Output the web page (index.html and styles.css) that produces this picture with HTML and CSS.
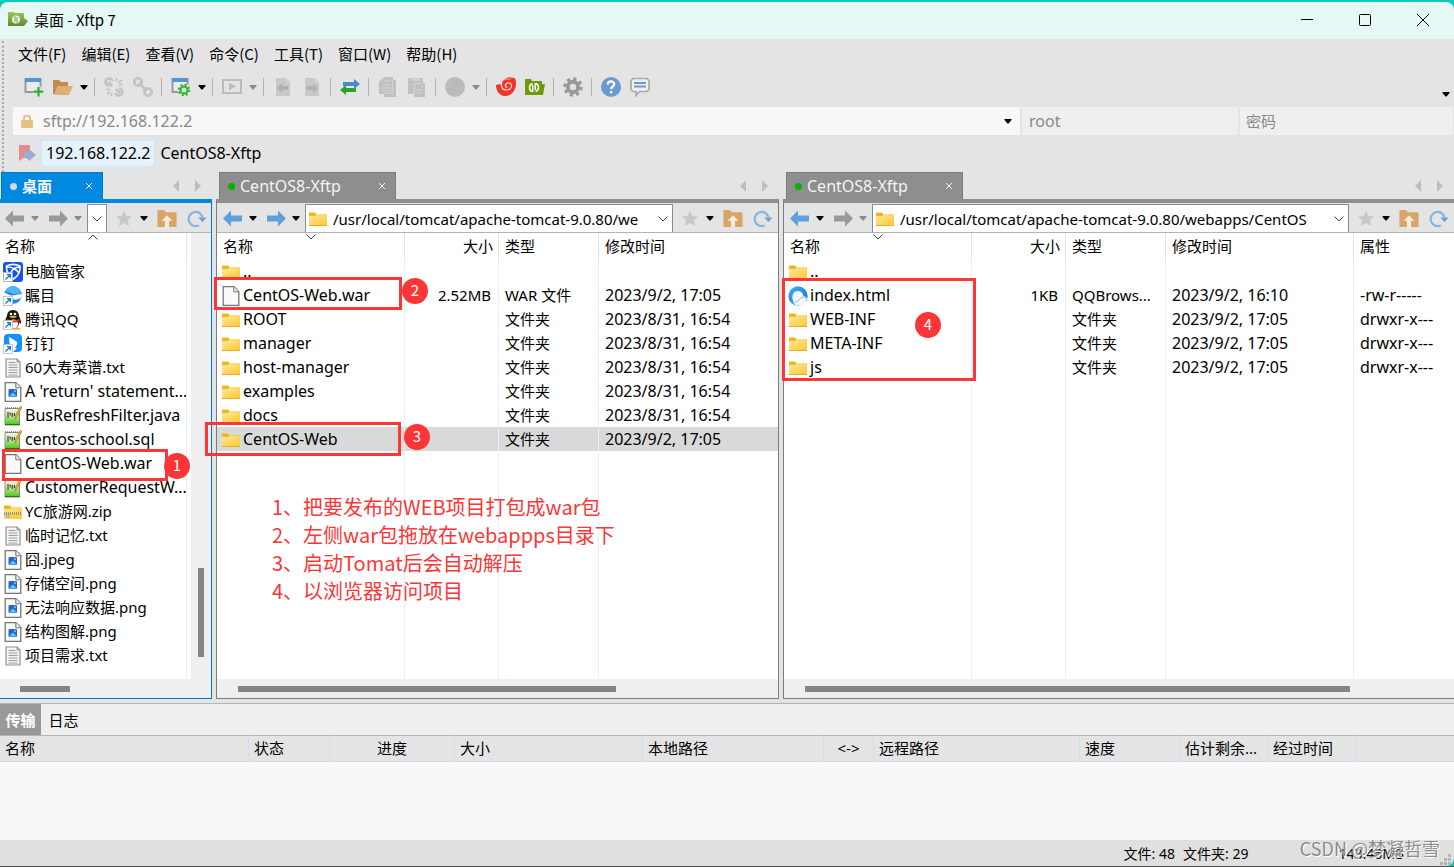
FILE: index.html
```html
<!DOCTYPE html>
<html lang="zh-CN">
<head>
<meta charset="utf-8">
<title>桌面 - Xftp 7</title>
<link rel="stylesheet" href="styles.css">
</head>
<body>
<svg class="sprite" aria-hidden="true">
  <defs>
    <linearGradient id="gFolder" x1="0" y1="0" x2="1" y2="1"><stop offset="0" stop-color="#ffe69a"/><stop offset="1" stop-color="#fdc72f"/></linearGradient>
    <linearGradient id="gApp" x1="0" y1="0" x2="0" y2="1"><stop offset="0" stop-color="#a3c25c"/><stop offset="1" stop-color="#5f8a35"/></linearGradient>
    <linearGradient id="gNpp" x1="0" y1="0" x2="0" y2="1"><stop offset="0" stop-color="#f4f8e8"/><stop offset=".4" stop-color="#c9eda0"/><stop offset="1" stop-color="#3cc40c"/></linearGradient>
    <linearGradient id="gQb" x1="0" y1="0" x2="1" y2="1"><stop offset="0" stop-color="#3fb4fb"/><stop offset="1" stop-color="#1466d8"/></linearGradient>
    <symbol id="caret" viewBox="0 0 8 5"><path d="M.5 0h7v1L4.500 4.500h-1L.5 1z" fill="currentColor"/></symbol>
    <symbol id="chev" viewBox="0 0 10 6"><path d="M.5.5 5 5 9.500.5" fill="none" stroke="#444" /></symbol>
    <symbol id="close" viewBox="0 0 8 8"><path d="M1 1l6 6M7 1 1 7" fill="none" stroke="currentColor"/></symbol>
    <symbol id="folder" viewBox="0 0 18 15"><path d="M0 1h6l1.500 2H18v2H0z" fill="#f5b417"/><path d="M0 4.500h6L7.500 3.300H18V14.500H0z" fill="url(#gFolder)"/><path d="M0 14h18" stroke="#e6ab27"/></symbol>
    <symbol id="page" viewBox="0 0 17 20"><path d="M.7.700h10.800l4.800 4.800v13.800H.7z" fill="#fafafa" stroke="#777" stroke-width="1.300"/><path d="M11.300.8v5h5" fill="#eee" stroke="#777"/></symbol>
    <symbol id="txt" viewBox="0 0 17 20"><path d="M1.500 1h11l3 3v15h-14z" fill="#f4f4f4" stroke="#929292" stroke-width="1.200"/><path d="M12.500 1v3h3" fill="none" stroke="#929292"/><path d="M4 4.500h7M4 7h9M4 9.500h9M4 12h9M4 14.500h9M4 17h9" stroke="#9a9a9a"/></symbol>
    <symbol id="img" viewBox="0 0 17 20"><path d="M.7.700h10.800l4.800 4.800v13.800H.7z" fill="#fafafa" stroke="#777" stroke-width="1.300"/><path d="M11.300.8v5h5" fill="#eee" stroke="#777"/><rect x="4" y="7" width="8.500" height="8" rx="1" fill="#2468cc"/><path d="M4.500 14.500l4-4 4 4z" fill="#5cc8ff"/><circle cx="10.500" cy="9" r=".8" fill="#fff"/></symbol>
    <symbol id="npp" viewBox="0 0 18 20"><path d="M1 2.500h14.500v16.500H1z" fill="url(#gNpp)" stroke="#8c8c8c"/><path d="M1 2h14" stroke="#777" stroke-width="1.500" stroke-dasharray="1 1"/><path d="M4 6v6M6.200 6.500v3M8.300 7v4M10.400 7v3" stroke="#444" stroke-width="1.200"/><path d="M18 1.200 13 11l-2 2.500.3-3.500L16.200.5z" fill="#f0b535" stroke="#9a6410" stroke-width=".6"/><path d="M1 18.500h15" stroke="#287a10"/></symbol>
    <symbol id="zip" viewBox="0 0 18 15"><path d="M0 1h6l1.500 2H18v2H0z" fill="#f5b417"/><path d="M0 4.500h6L7.500 3.300H18V14.500H0z" fill="url(#gFolder)"/><path d="M0 9h18" stroke="#888" stroke-width="2.500" stroke-dasharray="1 1"/><path d="M2 9.500v3h3v-3z" fill="#ddd" stroke="#777" stroke-width=".6"/></symbol>
    <symbol id="shortcut" viewBox="0 0 20 20"><rect x=".5" y="10.500" width="9" height="9" fill="#fff" stroke="#bbb" stroke-width=".8"/><path d="M2.500 17.500 7 13M3.800 12.700H7.300V16.200" fill="none" stroke="#0a7bd8" stroke-width="1.300"/></symbol>
    <symbol id="guanjia" viewBox="0 0 20 20"><rect width="20" height="20" rx="3" fill="#1453f0"/><path d="M3.500 4c4-2 9-2 13.500 0 .5 6-2 10-6.500 13C6 14 3 10 3.500 4zM4 5c5 0 9 2 12 6M17 5c-5 0-8 2-10 7" fill="none" stroke="#fff" stroke-width="1.600"/><use href="#shortcut"/></symbol>
    <symbol id="zhumu" viewBox="0 0 20 20"><circle cx="10" cy="9" r="8.700" fill="#1f86e6"/><path d="M1 6.500c4 1 5 3 8 3s6-2 10-1c0 3-2 4-5 5-5 1-8-4-13-2z" fill="#fff"/><path d="M1.500 6c3-6 9-7 12-5s5 4 5 6.500c-3-1-5 .5-8 .5S6 5 1.500 6z" fill="#4fb4f8"/><use href="#shortcut"/></symbol>
    <symbol id="qq" viewBox="0 0 20 20"><path d="M10 0c4 0 6 3 6 6 1 2 2 4 2 7 0 1-1 1-2-1 0 4-2 7-6 7s-6-3-6-7c-1 2-2 2-2 1 0-3 1-5 2-7 0-3 2-6 6-6z" fill="#171717"/><ellipse cx="10.500" cy="14" rx="4.500" ry="4.500" fill="#fff"/><circle cx="8" cy="4" r="1.300" fill="#fff"/><circle cx="12" cy="4" r="1.300" fill="#fff"/><path d="M6 6.500q4-1.500 8 0-4 3-8 0z" fill="#f8b51a"/><path d="M4 9q6 3 12.500 0v2q-6 3-12.500 0z" fill="#e8262b"/><path d="M11 19q3-2 6 0z" fill="#f8a51a" stroke="#f8a51a"/><use href="#shortcut"/></symbol>
    <symbol id="ding" viewBox="0 0 20 20"><rect x="1" width="18" height="18" rx="4" fill="#1590fa"/><path d="M6 3c3 2 6 3 8 5 1 2-1 4-2 6l2 0-5 5 1-4-2-1 1-1C7 11 6 9 6 3z" fill="#fff"/><use href="#shortcut"/></symbol>
    <symbol id="qb" viewBox="0 0 20 20"><circle cx="10" cy="10" r="9.700" fill="url(#gQb)"/><path d="M5 15c-2-6 1-10 5-10 3 0 5 2 5.500 5 2.500.5 4.500 3 4 6-.5 2.500-2 3.500-4 3.500H9C7 19 5.500 17.500 5 15z" fill="#f3f8ff"/><path d="M7 16c3 1 5-5 8-5 2 0 3 2 4 4" fill="none" stroke="#8bb4e6"/></symbol>
    <symbol id="back" viewBox="0 0 20 16"><path d="M0 8 8 0v5h11v6H8v5z" fill="currentColor"/></symbol>
    <symbol id="fwd" viewBox="0 0 20 16"><path d="M20 8 12 0v5H1v6h11v5z" fill="currentColor"/></symbol>
    <symbol id="star" viewBox="0 0 16 16"><path d="M8 0l2.300 5.400L16 6l-4.200 3.700L13 15.500 8 12.500l-5 3 1.200-5.800L0 6l5.700-.6z" fill="#c8c8c8"/></symbol>
    <symbol id="up" viewBox="0 0 18 16"><path d="M0 1q0-1 1-1h5l2 2h9q1 0 1 1v13H0z" fill="#d8a566"/><path d="M9 5 4 10h3v6h4v-6h3z" fill="#f4ece1"/></symbol>
    <symbol id="refresh" viewBox="0 0 20 18"><path d="M12 16.300A7.500 7.500 0 1 1 16 8" fill="none" stroke="#85b4df" stroke-width="2.300"/><path d="M11.500 8H20l-4.200 5z" fill="#6aa2d8"/></symbol>
    <symbol id="i-new" viewBox="0 0 20 20"><path d="M1.500 2h15v13h-15z" fill="#e9edf0" stroke="#999" stroke-width="2"/><path d="M1 1h16v4H1z" fill="#5596d0"/><path d="M14.500 9.500v10M9.500 14.500h10" stroke="#e4e4e4" stroke-width="5"/><path d="M14.500 10v9.500M9.700 14.700h9.600" stroke="#2db32c" stroke-width="2.200"/></symbol>
    <symbol id="i-open" viewBox="0 0 20 16"><path d="M0 1h6l2 2h7v4H5L2 15H0z" fill="#c28c4b"/><path d="M5 7h15l-4 9H1z" fill="#deb077"/></symbol>
    <symbol id="i-unlink" viewBox="0 0 20 20"><g fill="none" stroke="#c3c3c3" stroke-width="2.600"><path d="M8.500 4A3.500 3.500 0 1 0 5 8.500M11.500 16A3.500 3.500 0 1 0 15 11.500"/><path d="M4 5l4 4M12 12l4 4"/><path d="M2 12l4 1M3 17l3-2M7 19l1-3M12 4l1-3M14 6l4-3M15 8l4-1" stroke-width="1.800"/></g></symbol>
    <symbol id="i-link" viewBox="0 0 20 20"><g fill="none" stroke="#c3c3c3" stroke-width="2.600"><circle cx="5" cy="5" r="3.700"/><circle cx="15" cy="15" r="3.700"/><path d="M6 6l8 8"/></g></symbol>
    <symbol id="i-prop" viewBox="0 0 20 20"><path d="M1.500 2h15v13h-15z" fill="#e9edf0" stroke="#999" stroke-width="2"/><path d="M1 1h16v4H1z" fill="#5596d0"/><circle cx="13" cy="13" r="6.500" fill="#e4e4e4"/><circle cx="13" cy="13" r="3.500" fill="none" stroke="#2db32c" stroke-width="2"/><circle cx="13" cy="13" r="5.300" fill="none" stroke="#2db32c" stroke-width="2" stroke-dasharray="2 2.160"/></symbol>
    <symbol id="i-run" viewBox="0 0 20 20"><rect x="1" y="3" width="18" height="13" fill="none" stroke="#bcbcbc" stroke-width="2"/><path d="M7 5.500l7 4-7 4z" fill="#bcbcbc"/></symbol>
    <symbol id="i-left" viewBox="0 0 20 20"><path d="M3 1h10l4 4v14H3z" fill="#c8c8c8"/><path d="M13 1v4h4" fill="none" stroke="#ddd"/><path d="M4 11l5-5v3h6v4H9v3z" fill="#b2b2b2"/></symbol>
    <symbol id="i-right" viewBox="0 0 20 20"><path d="M3 1h10l4 4v14H3z" fill="#c8c8c8"/><path d="M13 1v4h4" fill="none" stroke="#ddd"/><path d="M16 11l-5-5v3H5v4h6v3z" fill="#b2b2b2"/></symbol>
    <symbol id="i-swap" viewBox="0 0 20 16"><path d="M20 5l-6-5v3H3v4h11v3z" fill="#4a87cf"/><path d="M0 11l6-5v3h10v4H6v3z" fill="#2aa32a"/></symbol>
    <symbol id="i-copy" viewBox="0 0 20 20"><path d="M6 0h9v3h3v17H6v-3H1V5z" fill="#c1c1c1"/><path d="M5 8h8M4 11h9M4 14h9M6 4h7" stroke="#d2d2d2"/><path d="M14.500 3v13.500H6" fill="none" stroke="#d0d0d0"/></symbol>
    <symbol id="i-paste" viewBox="0 0 20 20"><path d="M1 1h15v5h2v14H7v-3H1z" fill="#c1c1c1"/><path d="M4 2.500h9" stroke="#d6d6d6" stroke-width="2"/><path d="M7.500 17V6.500H13l4 4" fill="none" stroke="#d6d6d6"/><path d="M9 13h6M9 16h6" stroke="#d2d2d2"/></symbol>
    <symbol id="i-globe" viewBox="0 0 20 20"><circle cx="10" cy="10" r="10" fill="#bbb"/><path d="M9 3l3 2-2 2 2 3M5 12l3 2" fill="none" stroke="#b3b3b3"/></symbol>
    <symbol id="i-xshell" viewBox="0 0 20 20"><path d="M0 8c3-1 4-1 6 0 0-4 2-6 5-7 2-1 4-1 5 0 3-1 4 2 4 5 0 7-4 13-11 13C3 19 0 13 0 8z" fill="#f03428"/><path d="M5.500 8c0 3 2 5 5 5s5-2 5-4.500-3-3.500-5-2-1 4 1 3.500" fill="none" stroke="#f0e4e2" stroke-width="1.200"/><path d="M5 4.500C8 2 11 2 15 2" fill="none" stroke="#f0c8c4" stroke-width=".8"/></symbol>
    <symbol id="i-xftp" viewBox="0 0 20 16"><path d="M0 0h6l1 2h10v3h3l-2 11H0z" fill="#6b9a0c"/><path d="M7.500 4.500Q4.500 5.500 4.500 8.500T7 12.500M7.700 13V6M10.300 4v7M11 4.500Q13.500 5.500 13.500 8.500T10.500 12.500" fill="none" stroke="#fff" stroke-width="1.500"/></symbol>
    <symbol id="i-app" viewBox="0 0 20 15"><path d="M0 0h6l1 1h9v5l4 3-4 5H0z" fill="url(#gApp)"/><circle cx="8" cy="7.500" r="4" fill="#f3f7e9"/><path d="M7 4v6M9 5v6" stroke="#79a045"/></symbol>
    <symbol id="i-gear" viewBox="0 0 20 20"><circle cx="10" cy="10" r="5.200" fill="none" stroke="#999" stroke-width="4"/><circle cx="10" cy="10" r="8" fill="none" stroke="#999" stroke-width="3.500" stroke-dasharray="3.140 3.140"/></symbol>
    <symbol id="i-help" viewBox="0 0 20 20"><circle cx="10" cy="10" r="10" fill="#6a9bd0"/><path d="M6.800 7.500c0-4 6.400-4 6.400-.3 0 2.300-3 2.300-3 5M10.100 14v2.300" fill="none" stroke="#fff" stroke-width="2.300"/></symbol>
    <symbol id="i-chat" viewBox="0 0 20 20"><path d="M3 1.500h14l2 2v9l-2 2H9.500L6 18.500v-4H3l-2-2v-9z" fill="#f0f0f0" stroke="#aaa" stroke-width="1.700"/><path d="M4 6h12M4 9.500h12" stroke="#6a9bd0" stroke-width="1.800"/></symbol>
    <symbol id="i-lock" viewBox="0 0 12 13"><path d="M3 6V3.500a3 3 0 0 1 6 0V6" fill="none" stroke="#e7c184" stroke-width="2"/><rect y="5" width="12" height="8" rx="1" fill="#e7c184"/></symbol>
    <symbol id="i-mark" viewBox="0 0 17 17"><path d="M0 0h11v16l-5-4-6 4z" fill="#e28c8c"/><path d="M5 7h5V4l7 6-7 6v-3H5z" fill="#8fb0da"/></symbol>
    <symbol id="tri-l" viewBox="0 0 6 12"><path d="M6 0v12L0 6z" fill="#bdbdbd"/></symbol>
    <symbol id="tri-r" viewBox="0 0 6 12"><path d="M0 0v12l6-6z" fill="#bdbdbd"/></symbol>
  </defs>
</svg>

<div class="window">
  <header class="titlebar">
    <svg class="app-icon"><use href="#i-app"/></svg>
    <h1>桌面 - Xftp 7</h1>
    <div class="win-buttons">
      <button type="button" aria-label="最小化"><svg viewBox="0 0 12 12"><path d="M0 5.500h12"/></svg></button>
      <button type="button" aria-label="最大化"><svg viewBox="0 0 12 12"><rect x=".5" y=".5" width="11" height="11" rx="1"/></svg></button>
      <button type="button" aria-label="关闭"><svg viewBox="0 0 12 12"><path d="M0 0l12 12M12 0 0 12"/></svg></button>
    </div>
  </header>

  <div class="bars">
    <nav class="menu">
      <button type="button">文件(F)</button><button type="button">编辑(E)</button><button type="button">查看(V)</button><button type="button">命令(C)</button><button type="button">工具(T)</button><button type="button">窗口(W)</button><button type="button">帮助(H)</button>
    </nav>
    <div class="toolbar">
      <button type="button" aria-label="新建"><svg><use href="#i-new"/></svg></button>
      <button type="button" aria-label="打开"><svg><use href="#i-open"/></svg></button>
      <button type="button" class="drop" aria-label="打开列表"><svg><use href="#caret"/></svg></button>
      <span class="sep"></span>
      <button type="button" aria-label="断开"><svg><use href="#i-unlink"/></svg></button>
      <button type="button" aria-label="重新连接"><svg><use href="#i-link"/></svg></button>
      <span class="sep"></span>
      <button type="button" aria-label="属性"><svg><use href="#i-prop"/></svg></button>
      <button type="button" class="drop" aria-label="属性列表"><svg><use href="#caret"/></svg></button>
      <span class="sep"></span>
      <button type="button" aria-label="运行"><svg><use href="#i-run"/></svg></button>
      <button type="button" class="drop dim" aria-label="运行列表"><svg><use href="#caret"/></svg></button>
      <span class="sep"></span>
      <button type="button" aria-label="传到左侧"><svg><use href="#i-left"/></svg></button>
      <button type="button" aria-label="传到右侧"><svg><use href="#i-right"/></svg></button>
      <span class="sep"></span>
      <button type="button" aria-label="同步"><svg><use href="#i-swap"/></svg></button>
      <span class="sep"></span>
      <button type="button" aria-label="复制"><svg><use href="#i-copy"/></svg></button>
      <button type="button" aria-label="粘贴"><svg><use href="#i-paste"/></svg></button>
      <span class="sep"></span>
      <button type="button" aria-label="编码"><svg><use href="#i-globe"/></svg></button>
      <button type="button" class="drop dim" aria-label="编码列表"><svg><use href="#caret"/></svg></button>
      <span class="sep"></span>
      <button type="button" aria-label="Xshell"><svg><use href="#i-xshell"/></svg></button>
      <button type="button" aria-label="Xftp"><svg><use href="#i-xftp"/></svg></button>
      <span class="sep"></span>
      <button type="button" aria-label="选项"><svg><use href="#i-gear"/></svg></button>
      <span class="sep"></span>
      <button type="button" aria-label="帮助"><svg><use href="#i-help"/></svg></button>
      <button type="button" aria-label="反馈"><svg><use href="#i-chat"/></svg></button>
      <button type="button" class="drop overflow" aria-label="更多"><svg><use href="#caret"/></svg></button>
    </div>
    <form class="address">
      <div class="host"><svg class="lock"><use href="#i-lock"/></svg><input type="text" aria-label="主机" placeholder="sftp://192.168.122.2"><button type="button" class="drop" aria-label="主机列表"><svg><use href="#caret"/></svg></button></div>
      <input type="text" class="cred user" aria-label="用户名" placeholder="root">
      <input type="password" class="cred" aria-label="密码" placeholder="密码">
    </form>
    <nav class="links">
      <svg class="mark"><use href="#i-mark"/></svg>
      <a href="#" class="current">192.168.122.2</a><a href="#">CentOS8-Xftp</a>
    </nav>
  </div>

  <main class="panes">
    <section class="pane local">
      <div class="tabs"><div class="tab"><i class="dot"></i><b>桌面</b><button type="button" aria-label="关闭标签"><svg><use href="#close"/></svg></button></div><div class="arrows"><svg><use href="#tri-l"/></svg><svg><use href="#tri-r"/></svg></div></div>
      <div class="pane-body">
        <div class="nav">
          <button type="button" class="off" aria-label="后退"><svg><use href="#back"/></svg></button><button type="button" class="drop dim" aria-label="后退列表"><svg><use href="#caret"/></svg></button>
          <button type="button" class="off next" aria-label="前进"><svg><use href="#fwd"/></svg></button><button type="button" class="drop dim" aria-label="前进列表"><svg><use href="#caret"/></svg></button>
          <div class="path short"><button type="button" aria-label="路径列表"><svg><use href="#chev"/></svg></button></div>
          <button type="button" aria-label="收藏"><svg class="star"><use href="#star"/></svg></button><button type="button" class="drop" aria-label="收藏列表"><svg><use href="#caret"/></svg></button>
          <button type="button" class="next" aria-label="上一级"><svg><use href="#up"/></svg></button><button type="button" class="last" aria-label="刷新"><svg><use href="#refresh"/></svg></button>
        </div>
        <div class="list">
          <table>
            <thead><tr><th>名称<svg class="sort asc"><use href="#chev"/></svg></th></tr></thead>
            <tbody>
              <tr><td><svg class="ic big"><use href="#guanjia"/></svg>电脑管家</td></tr>
              <tr><td><svg class="ic big"><use href="#zhumu"/></svg>瞩目</td></tr>
              <tr><td><svg class="ic big"><use href="#qq"/></svg>腾讯QQ</td></tr>
              <tr><td><svg class="ic big"><use href="#ding"/></svg>钉钉</td></tr>
              <tr><td><svg class="ic"><use href="#txt"/></svg>60大寿菜谱.txt</td></tr>
              <tr><td class="latin"><svg class="ic"><use href="#img"/></svg>A 'return' statement...</td></tr>
              <tr><td class="latin"><svg class="ic"><use href="#npp"/></svg>BusRefreshFilter.java</td></tr>
              <tr><td class="latin"><svg class="ic"><use href="#npp"/></svg>centos-school.sql</td></tr>
              <tr><td class="latin"><svg class="ic"><use href="#page"/></svg>CentOS-Web.war</td></tr>
              <tr><td class="latin"><svg class="ic"><use href="#npp"/></svg>CustomerRequestW...</td></tr>
              <tr><td><svg class="ic"><use href="#zip"/></svg>YC旅游网.zip</td></tr>
              <tr><td><svg class="ic"><use href="#txt"/></svg>临时记忆.txt</td></tr>
              <tr><td><svg class="ic"><use href="#img"/></svg>囧.jpeg</td></tr>
              <tr><td><svg class="ic"><use href="#img"/></svg>存储空间.png</td></tr>
              <tr><td><svg class="ic"><use href="#img"/></svg>无法响应数据.png</td></tr>
              <tr><td><svg class="ic"><use href="#img"/></svg>结构图解.png</td></tr>
              <tr><td><svg class="ic"><use href="#txt"/></svg>项目需求.txt</td></tr>
              <tr class="fill"><td></td></tr>
            </tbody>
          </table>
          <div class="vscroll"><i></i></div>
        </div>
        <div class="hscroll"><i></i></div>
      </div>
    </section>

    <section class="pane">
      <div class="tabs"><div class="tab"><i class="dot"></i><span>CentOS8-Xftp</span><button type="button" aria-label="关闭标签"><svg><use href="#close"/></svg></button></div><div class="arrows"><svg><use href="#tri-l"/></svg><svg><use href="#tri-r"/></svg></div></div>
      <div class="pane-body">
        <div class="nav">
          <button type="button" aria-label="后退"><svg><use href="#back"/></svg></button><button type="button" class="drop" aria-label="后退列表"><svg><use href="#caret"/></svg></button>
          <button type="button" class="next" aria-label="前进"><svg><use href="#fwd"/></svg></button><button type="button" class="drop" aria-label="前进列表"><svg><use href="#caret"/></svg></button>
          <div class="path"><svg class="ic"><use href="#folder"/></svg><input type="text" aria-label="路径" value="/usr/local/tomcat/apache-tomcat-9.0.80/we"><button type="button" aria-label="路径列表"><svg><use href="#chev"/></svg></button></div>
          <button type="button" aria-label="收藏"><svg class="star"><use href="#star"/></svg></button><button type="button" class="drop" aria-label="收藏列表"><svg><use href="#caret"/></svg></button>
          <button type="button" class="next" aria-label="上一级"><svg><use href="#up"/></svg></button><button type="button" class="last" aria-label="刷新"><svg><use href="#refresh"/></svg></button>
        </div>
        <div class="list">
          <table>
            <colgroup><col class="c-name"><col class="c-size"><col class="c-type"><col></colgroup>
            <thead><tr><th>名称<svg class="sort"><use href="#chev"/></svg></th><th class="num">大小</th><th>类型</th><th>修改时间</th></tr></thead>
            <tbody>
              <tr><td class="latin"><svg class="ic"><use href="#folder"/></svg>..</td><td></td><td></td><td></td></tr>
              <tr><td class="latin"><svg class="ic"><use href="#page"/></svg>CentOS-Web.war</td><td class="num">2.52MB</td><td>WAR 文件</td><td class="latin">2023/9/2, 17:05</td></tr>
              <tr><td class="latin"><svg class="ic"><use href="#folder"/></svg>ROOT</td><td></td><td>文件夹</td><td class="latin">2023/8/31, 16:54</td></tr>
              <tr><td class="latin"><svg class="ic"><use href="#folder"/></svg>manager</td><td></td><td>文件夹</td><td class="latin">2023/8/31, 16:54</td></tr>
              <tr><td class="latin"><svg class="ic"><use href="#folder"/></svg>host-manager</td><td></td><td>文件夹</td><td class="latin">2023/8/31, 16:54</td></tr>
              <tr><td class="latin"><svg class="ic"><use href="#folder"/></svg>examples</td><td></td><td>文件夹</td><td class="latin">2023/8/31, 16:54</td></tr>
              <tr><td class="latin"><svg class="ic"><use href="#folder"/></svg>docs</td><td></td><td>文件夹</td><td class="latin">2023/8/31, 16:54</td></tr>
              <tr class="selected"><td class="latin"><svg class="ic"><use href="#folder"/></svg>CentOS-Web</td><td></td><td>文件夹</td><td class="latin">2023/9/2, 17:05</td></tr>
              <tr class="fill"><td></td><td></td><td></td><td></td></tr>
            </tbody>
          </table>
        </div>
        <div class="hscroll"><i></i></div>
      </div>
    </section>

    <section class="pane remote">
      <div class="tabs"><div class="tab"><i class="dot"></i><span>CentOS8-Xftp</span><button type="button" aria-label="关闭标签"><svg><use href="#close"/></svg></button></div><div class="arrows"><svg><use href="#tri-l"/></svg><svg><use href="#tri-r"/></svg></div></div>
      <div class="pane-body">
        <div class="nav">
          <button type="button" aria-label="后退"><svg><use href="#back"/></svg></button><button type="button" class="drop" aria-label="后退列表"><svg><use href="#caret"/></svg></button>
          <button type="button" class="off next" aria-label="前进"><svg><use href="#fwd"/></svg></button><button type="button" class="drop dim" aria-label="前进列表"><svg><use href="#caret"/></svg></button>
          <div class="path"><svg class="ic"><use href="#folder"/></svg><input type="text" aria-label="路径" value="/usr/local/tomcat/apache-tomcat-9.0.80/webapps/CentOS"><button type="button" aria-label="路径列表"><svg><use href="#chev"/></svg></button></div>
          <button type="button" aria-label="收藏"><svg class="star"><use href="#star"/></svg></button><button type="button" class="drop" aria-label="收藏列表"><svg><use href="#caret"/></svg></button>
          <button type="button" class="next" aria-label="上一级"><svg><use href="#up"/></svg></button><button type="button" class="last" aria-label="刷新"><svg><use href="#refresh"/></svg></button>
        </div>
        <div class="list">
          <table>
            <colgroup><col class="c-name"><col class="c-size"><col class="c-type"><col class="c-time"><col></colgroup>
            <thead><tr><th>名称<svg class="sort"><use href="#chev"/></svg></th><th class="num">大小</th><th>类型</th><th>修改时间</th><th>属性</th></tr></thead>
            <tbody>
              <tr><td class="latin"><svg class="ic"><use href="#folder"/></svg>..</td><td></td><td></td><td></td><td></td></tr>
              <tr><td class="latin"><svg class="ic big"><use href="#qb"/></svg>index.html</td><td class="num">1KB</td><td>QQBrows...</td><td class="latin">2023/9/2, 16:10</td><td class="latin">-rw-r-----</td></tr>
              <tr><td class="latin"><svg class="ic"><use href="#folder"/></svg>WEB-INF</td><td></td><td>文件夹</td><td class="latin">2023/9/2, 17:05</td><td class="latin">drwxr-x---</td></tr>
              <tr><td class="latin"><svg class="ic"><use href="#folder"/></svg>META-INF</td><td></td><td>文件夹</td><td class="latin">2023/9/2, 17:05</td><td class="latin">drwxr-x---</td></tr>
              <tr><td class="latin"><svg class="ic"><use href="#folder"/></svg>js</td><td></td><td>文件夹</td><td class="latin">2023/9/2, 17:05</td><td class="latin">drwxr-x---</td></tr>
              <tr class="fill"><td></td><td></td><td></td><td></td><td></td></tr>
            </tbody>
          </table>
        </div>
        <div class="hscroll"><i></i></div>
      </div>
    </section>

    <div class="frame f1"></div><span class="badge b1">1</span>
    <div class="frame f2"></div><span class="badge b2">2</span>
    <div class="frame f3"></div><span class="badge b3">3</span>
    <div class="frame f4"></div><span class="badge b4">4</span>
    <div class="notes"><p>1、把要发布的WEB项目打包成war包</p><p>2、左侧war包拖放在webappps目录下</p><p>3、启动Tomat后会自动解压</p><p>4、以浏览器访问项目</p></div>
  </main>

  <section class="transfer">
    <div class="switch"><button type="button" class="on">传输</button><button type="button">日志</button></div>
    <table>
      <colgroup><col class="w-name"><col class="w-state"><col class="w-prog"><col class="w-size"><col class="w-local"><col class="w-dir"><col class="w-remote"><col class="w-speed"><col class="w-time"><col class="w-time"><col></colgroup>
      <thead><tr><th>名称</th><th>状态</th><th class="mid">进度</th><th>大小</th><th>本地路径</th><th class="mid">&lt;-&gt;</th><th>远程路径</th><th>速度</th><th>估计剩余...</th><th>经过时间</th><th></th></tr></thead>
    </table>
    <div class="queue"></div>
  </section>
  <footer class="status">
    <span>文件: 48</span><span>文件夹: 29</span><span class="total">143.46MB</span>
    <svg class="grip" viewBox="0 0 12 12"><path d="M8 0h3v3H8zM4 4h3v3H4zM8 4h3v3H8zM0 8h3v3H0zM4 8h3v3H4zM8 8h3v3H8z" fill="#b4b4b4"/></svg>
    <span class="credit">CSDN @梦凝哲雪</span>
  </footer>
</div>
</body>
</html>
```
FILE: styles.css
```css
* { box-sizing: border-box; }
body {
  margin: 0;
  background: #08cbbd;
  color: #000;
  font: 15px/24px "Noto Sans", "Noto Sans CJK SC", sans-serif;
}
button, input { font: inherit; color: inherit; border: 0; padding: 0; margin: 0; background: none; }
button { display: flex; align-items: center; justify-content: center; white-space: nowrap; }
p, h1 { margin: 0; }
.sprite { position: absolute; width: 0; height: 0; }

.window {
  min-height: 100vh;
  display: flex;
  flex-direction: column;
  border-top: 2px solid #08cbbd;
  border-bottom: 1px solid #4a4a4a;
}

/* title bar */
.titlebar {
  height: 37px;
  display: flex;
  align-items: center;
  padding: 0 2px 2px 8px;
  background: #e5f8f6;
  border-radius: 8px 8px 0 0;
  font-family: "Noto Sans CJK SC", sans-serif;
}
.app-icon { width: 20px; height: 15px; margin-right: 6px; }
.titlebar h1 { font-size: 15px; font-weight: 400; }
.win-buttons { display: flex; margin-left: auto; }
.win-buttons button { width: 58px; height: 35px; }
.win-buttons svg { width: 12px; height: 12px; fill: none; stroke: #000; }

/* menu, toolbar, address and links */
.bars { position: relative; background: #e4e4e4; }
.bars::before {
  content: "";
  position: absolute;
  left: 2px;
  top: 2px;
  bottom: 0;
  border-left: 2px dotted #aaa;
}
.menu {
  display: flex;
  gap: 15px;
  height: 31px;
  padding: 0 0 2px 18px;
  align-items: center;
  font-family: "Noto Sans CJK SC", sans-serif;
}
.toolbar { display: flex; height: 34px; padding-left: 19px; align-items: center; }
.toolbar button { width: 29px; height: 30px; }
.toolbar svg { width: 20px; height: 20px; }
.toolbar .drop, .drop { width: 13px; }
.toolbar .drop svg, .drop svg { width: 8px; height: 5px; }
.dim { color: #8c8c8c; }
.sep { width: 9px; height: 18px; background: linear-gradient(#b4b4b4, #b4b4b4) center / 1px 100% no-repeat; }
.toolbar .overflow { margin-left: auto; width: 16px; align-self: flex-end; height: 20px; }
.address { display: flex; gap: 2px; height: 28px; margin: 3px 1px 0 13px; color: #888; }
.host { flex: 1; display: flex; align-items: center; background: #f8f8f8; padding-left: 8px; }
.lock { width: 12px; height: 13px; margin-right: 10px; }
.host input { flex: 1; }
.host .drop { width: 24px; color: #000; }
.cred { width: 213px; padding: 0 6px; background: #efefef; }
.user { width: 216px; padding-left: 7px; }
input::placeholder { color: #888; opacity: 1; }
.address input { font-size: 16px; }
.address input[type="password"] { font-size: 15px; }
.links { display: flex; align-items: center; height: 37px; padding-left: 19px; font-size: 16px; }
.links a { color: #000; text-decoration: none; padding: 0 4px; border: 1px solid transparent; border-radius: 2px; line-height: 25px; }
.links .current { background: #e5f1fb; border-color: #cce6fb; }
.mark { width: 17px; height: 17px; margin-right: 5px; }

/* file panes */
.panes {
  position: relative;
  flex: 1;
  display: grid;
  grid-template-columns: 212fr 563fr 671fr;
  gap: 4px;
  background: #e4e4e4;
  padding-bottom: 4px;
}
.pane { --accent: #8e8e8e; --edge: #7c7c7c; display: flex; flex-direction: column; min-width: 0; }
.local { --accent: #0089e1; --edge: #0078c8; }
.tabs { display: flex; height: 27px; padding-left: 3px; }
.local .tabs { padding-left: 1px; }
.tab {
  display: flex;
  align-items: center;
  width: 177px;
  padding-left: 8px;
  color: #f4f4f4;
  background: var(--accent);
  border: 1px solid var(--edge);
  border-bottom: 0;
}
.local .tab { width: 102px; }
.tab b { font-weight: 700; }
.tab span { font-size: 16px; }
.tab button { margin-left: auto; width: 26px; height: 24px; }
.tab button svg { width: 8px; height: 8px; }
.dot { width: 7px; height: 7px; margin-right: 5px; border-radius: 50%; background: #00b400; }
.local .dot { background: #cfd8e0; }
.arrows { display: flex; gap: 16px; margin-left: auto; padding-right: 11px; align-items: center; }
.arrows svg { width: 6px; height: 12px; }
.pane-body {
  flex: 1;
  display: flex;
  flex-direction: column;
  border: 1px solid var(--edge);
  border-top: 4px solid var(--accent);
  background: #fff;
}
.local .pane-body { border-left: 0; }
.remote .pane-body { border-right: 0; }
.nav {
  display: flex;
  height: 30px;
  padding: 1px 1px 0 2px;
  align-items: center;
  background: #e4e4e4;
  border-bottom: 1px solid #b4b4b4;
}
.local .nav { padding: 1px 0 0 1px; }
.nav button { width: 28px; height: 26px; color: #5fa0d8; }
.nav button svg { width: 20px; height: 17px; }
.nav .star { width: 16px; }
.nav .off { color: #999; }
.nav .drop { width: 12px; color: #000; }
.nav .dim { color: #8c8c8c; }
.nav .drop svg { width: 8px; height: 5px; }
.nav .next { margin-left: 3px; }
.nav .last { margin-left: 2px; }
.path {
  flex: 1;
  min-width: 0;
  display: flex;
  align-items: center;
  height: 28px;
  margin: 0 3px 0 3px;
  padding-left: 3px;
  background: #fff;
  border: 1px solid #8c8c8c;
  border-bottom: 0;
}
.path.short { padding: 0; justify-content: center; }
.path input { flex: 1; min-width: 0; margin-left: 3px; }
.path button { width: 18px; }
.nav .path button svg { width: 10px; height: 6px; }
.ic { width: 18px; height: 20px; margin-right: 3px; vertical-align: middle; }
.ic.big { width: 20px; margin: 0 2px 0 -1px; }
.list { flex: 1; display: flex; }
table { border-collapse: separate; border-spacing: 0; table-layout: fixed; width: 100%; }
.list table { flex: 1; }
th { font-weight: 400; text-align: left; }
.list th { position: relative; height: 26px; padding: 0 5px 0 6px; border-right: 1px solid #e2e2e2; line-height: 25px; }
.list td { height: 24px; padding: 0 5px 0 6px; border-right: 1px solid #e6f0fb; line-height: 23px; white-space: nowrap; overflow: hidden; }
.list td:first-child { padding: 0 0 0 5px; }
.list .latin { font-size: 16px; }
.local .list th { padding-left: 5px; }
.local .list td:first-child { padding-left: 4px; }
.list th:last-child, .list td:last-child { border-right: 0; }
.local .list th:last-child { border-right: 1px solid #e2e2e2; }
.local .list td:last-child { border-right: 1px solid #e6f0fb; }
.list .num { text-align: right; }
.list td.num { padding-right: 7px; }
.list .fill td { height: auto; }
.selected td { background: #d9d9d9; }
.sort { position: absolute; left: 50%; top: 1px; width: 10px; height: 6px; margin-left: -5px; }
.asc { transform: scaleY(-1); }
.c-name { width: 188px; }
.c-size { width: 94px; }
.c-type { width: 100px; }
.c-time { width: 188px; }
.vscroll { flex: 0 0 20px; margin-left: 4px; background: #efefef; display: flex; justify-content: center; align-items: flex-end; padding-bottom: 22px; }
.vscroll i { width: 6px; height: 21%; background: #858585; }
.hscroll { height: 19px; display: flex; align-items: center; padding-left: 21px; background: #efefef; }
.hscroll i { height: 6px; width: 70%; background: #858585; }
.local .hscroll { padding-left: 20px; }
.local .hscroll i { width: 26%; }
.remote .hscroll i { width: 84%; }

/* callouts drawn over the panes */
.frame { position: absolute; border: 3px solid #fc3636; }
.badge {
  position: absolute;
  width: 26px;
  height: 26px;
  border-radius: 50%;
  background: #fc3636;
  color: #fff;
  line-height: 24px;
  text-align: center;
  font-family: "Noto Sans CJK SC", sans-serif;
}
.f1 { left: 2px; top: 277px; width: 166px; height: 32px; }
.f2 { left: 214px; top: 105px; width: 188px; height: 33px; }
.f3 { left: 205px; top: 250px; width: 196px; height: 34px; }
.f4 { left: 782px; top: 106px; width: 194px; height: 103px; }
.b1 { left: 164px; top: 281px; }
.b2 { left: 402px; top: 106px; }
.b3 { left: 404px; top: 252px; }
.b4 { left: 915px; top: 140px; }
.notes { position: absolute; left: 272px; top: 321px; color: #fc3636; font: 20px/28px "Noto Sans CJK SC", sans-serif; }

/* transfer queue */
.transfer { background: #f8f8f8; border-top: 1px solid #b4b4b4; }
.switch { display: flex; height: 31px; background: #efefef; }
.switch button { width: 45px; }
.switch .on { width: 41px; background: #999; color: #fff; font-weight: 700; }
.transfer th {
  height: 27px;
  padding: 0 0 0 5px;
  line-height: 25px;
  background: #e4e4e4;
  border: solid #d2dcea;
  border-width: 0 1px 1px 0;
  border-top: 1px solid #b4b4b4;
  white-space: nowrap;
}
.transfer .mid { text-align: center; padding: 0; }
.transfer th:last-child { border-right: 0; }
.w-name { width: 249px; }
.w-state { width: 81px; }
.w-prog { width: 125px; }
.w-size { width: 188px; }
.w-local { width: 181px; }
.w-dir { width: 50px; }
.w-remote { width: 206px; }
.w-speed { width: 100px; }
.w-time { width: 88px; }
.queue { height: 78px; }

.status {
  position: relative;
  display: flex;
  justify-content: flex-end;
  gap: 8px;
  height: 26px;
  padding-right: 2px;
  background: #e0e0e0;
  border-radius: 0 0 8px 0;
  font-size: 14px;
  line-height: 28px;
}
.total { margin-left: 82px; margin-right: 28px; }
.grip { width: 12px; height: 12px; align-self: flex-end; }
.credit {
  position: absolute;
  right: 14px;
  top: -5px;
  color: #8c8c8c;
  text-shadow: 1px 1px 0 #fff;
  font: 18px/26px "Noto Sans CJK SC", sans-serif;
}
```
